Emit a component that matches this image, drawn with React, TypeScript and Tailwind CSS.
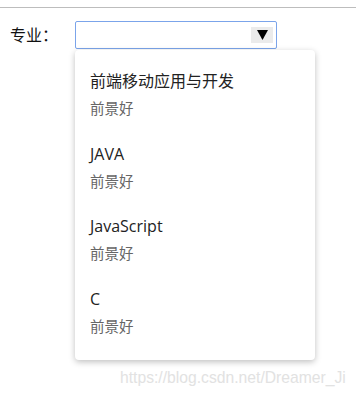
import React from 'react';

interface Major {
  name: string;
  note: string;
}

const majors: Major[] = [
  { name: '前端移动应用与开发', note: '前景好' },
  { name: 'JAVA', note: '前景好' },
  { name: 'JavaScript', note: '前景好' },
  { name: 'C', note: '前景好' },
];

const font = "font-['Segoe_UI','Open_Sans','Noto_Sans_CJK_SC',sans-serif]";

const App: React.FC = () => {
  return (
    <div className={`relative w-[356px] h-[396px] bg-white ${font}`}>
      <div className="pt-[7px]">
        <div className="h-px bg-[#bdbdbd]" />
      </div>

      <div className="flex items-center pl-[10px] mt-[13px]">
        <span className="text-[16px] leading-[28px] text-[#111]">专业：</span>
        <div className="relative ml-[17px]">
          <div className="w-[202px] h-[28px] border border-[#7ba4ea] rounded-[2px] flex items-center justify-end pr-[3px]">
            <div className="w-[22px] h-[16px] bg-[#ebebeb] flex items-center justify-center">
              <svg width="11" height="10" viewBox="0 0 11 10">
                <path d="M0 0 H11 L5.5 10 Z" fill="#000" />
              </svg>
            </div>
          </div>

          {/* dropdown list */}
          <ul className="absolute left-0 top-[29px] w-[240px] bg-white rounded-[4px] shadow-[0_2px_6px_rgba(0,0,0,0.25)] pt-[21px] pb-[23px] pl-[15px] flex flex-col gap-[24.5px]">
            {majors.map((m) => (
              <li key={m.name} className="flex flex-col gap-[8px]">
                <span className="text-[16px] leading-[20px] text-[#222]">{m.name}</span>
                <span className="text-[14.5px] leading-[20px] text-[#666]">{m.note}</span>
              </li>
            ))}
          </ul>
        </div>
      </div>

      <span className="absolute left-[120px] top-[367px] text-[15.7px] leading-[22px] text-[#e2e2e2] font-['Liberation_Sans',sans-serif]">
        https://blog.csdn.net/Dreamer_Ji
      </span>
    </div>
  );
};

export default App;
